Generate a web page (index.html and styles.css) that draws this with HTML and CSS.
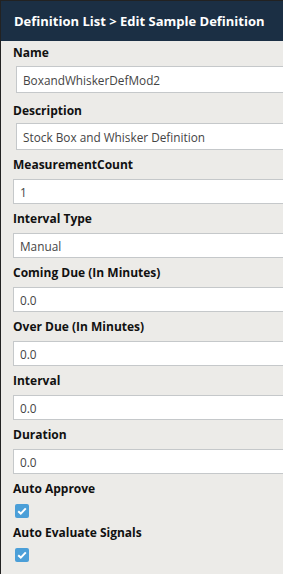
FILE: index.html
```html
<!DOCTYPE html>
<html lang="en">
<head>
  <meta charset="UTF-8" />
  <meta name="viewport" content="width=device-width, initial-scale=1.0"/>
  <title>Edit Sample Definition</title>
  <link rel="stylesheet" href="styles.css">
</head>
<body>

  <div class="panel">
    <div class="panel-header">Definition List &gt; Edit Sample Definition</div>

    <form class="def-form">
      <div class="form-group wide first">
        <label for="name">Name</label>
        <input type="text" id="name" value="BoxandWhiskerDefMod2">
      </div>

      <div class="form-group wide">
        <label for="description">Description</label>
        <input type="text" id="description" value="Stock Box and Whisker Definition">
      </div>

      <div class="form-group">
        <label for="count">MeasurementCount</label>
        <input type="text" id="count" value="1">
      </div>

      <div class="form-group">
        <label for="intervalType">Interval Type</label>
        <input type="text" id="intervalType" value="Manual">
      </div>

      <div class="form-group">
        <label for="comingDue">Coming Due (In Minutes)</label>
        <input type="text" id="comingDue" value="0.0">
      </div>

      <div class="form-group">
        <label for="overDue">Over Due (In Minutes)</label>
        <input type="text" id="overDue" value="0.0">
      </div>

      <div class="form-group">
        <label for="interval">Interval</label>
        <input type="text" id="interval" value="0.0">
      </div>

      <div class="form-group">
        <label for="duration">Duration</label>
        <input type="text" id="duration" value="0.0">
      </div>

      <div class="check-group">
        <label>Auto Approve</label>
        <span class="check-box">
          <svg width="10" height="8" viewBox="0 0 10 8"><path d="M1.2 4.2 L3.8 6.6 L8.8 1.4" fill="none" stroke="#fff" stroke-width="2"/></svg>
        </span>
      </div>

      <div class="check-group">
        <label>Auto Evaluate Signals</label>
        <span class="check-box">
          <svg width="10" height="8" viewBox="0 0 10 8"><path d="M1.2 4.2 L3.8 6.6 L8.8 1.4" fill="none" stroke="#fff" stroke-width="2"/></svg>
        </span>
      </div>
    </form>
  </div>

</body>
</html>
```

FILE: styles.css
```css
:root {
  --page-bg: #ecebe8;
  --header-bg: #1b2f44;
  --text-dark: #111;
  --input-border: #c5c8ca;
  --check-blue: #4b9fd8;
}

body {
  margin: 0;
  font-family: 'Open Sans', 'Noto Sans', sans-serif;
  background: var(--page-bg);
}

.panel {
  min-height: 100vh;
  box-sizing: border-box;
  border-top: 1px solid #222;
  border-left: 1px solid #222;
  overflow: hidden;
}

.panel-header {
  height: 40px;
  line-height: 40px;
  padding-left: 13px;
  background: var(--header-bg);
  color: #fff;
  font-size: 13px;
  font-weight: 700;
  white-space: nowrap;
}

.def-form {
  padding: 3px 0 0 12px;
}

.form-group {
  display: flex;
  flex-direction: column;
  gap: 5px;
  margin-bottom: 6px;
}

.form-group label,
.check-group label {
  display: block;
  height: 18px;
  line-height: 18px;
  font-size: 12px;
  font-weight: 700;
  color: var(--text-dark);
}

.form-group input {
  width: 300px;
  height: 25px;
  box-sizing: border-box;
  padding: 0 6px;
  border: 1px solid var(--input-border);
  border-radius: 0;
  background: #fff;
  font-family: inherit;
  font-size: 11.8px;
  color: #444;
  outline: none;
}

.form-group.wide {
  gap: 3px;
}

.form-group.wide.first {
  gap: 4px;
  margin-bottom: 9px;
}

.form-group.wide input {
  height: 27px;
  margin-left: 3px;
  padding: 0 6px;
}

.check-group {
  display: flex;
  flex-direction: column;
  align-items: flex-start;
  gap: 6px;
  margin-bottom: 6px;
}

.check-box {
  width: 14px;
  height: 14px;
  margin-left: 2px;
  border-radius: 2px;
  background: var(--check-blue);
  display: flex;
  align-items: center;
  justify-content: center;
}
```
